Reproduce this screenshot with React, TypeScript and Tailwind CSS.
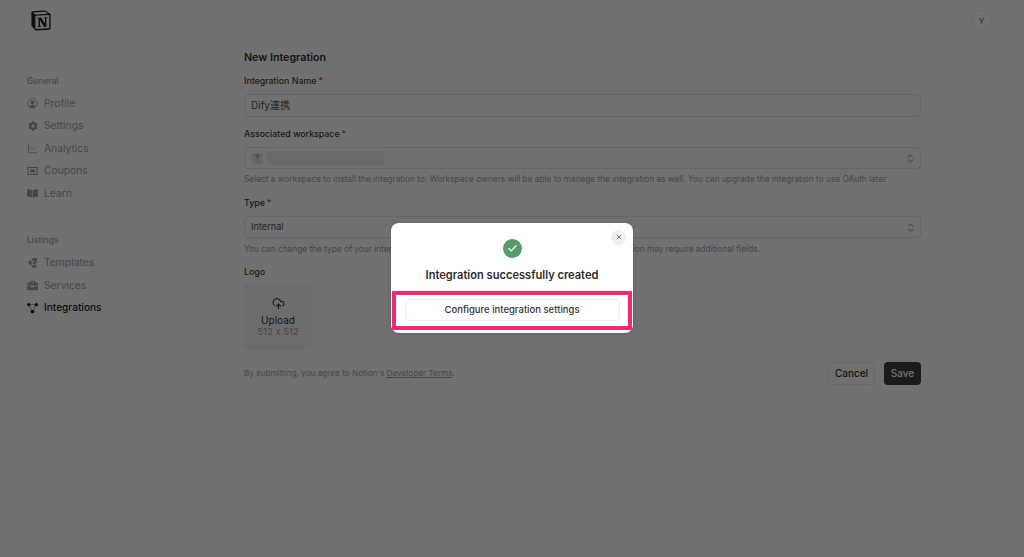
import { useState } from "react";
import { ChevronsUpDown, ChartLine, CloudUpload, Check, X } from "lucide-react";
import { FaBookOpen, FaBriefcase, FaCog } from "react-icons/fa";
import { SiNotion } from "react-icons/si";

const font = "font-['Inter','Noto_Sans_CJK_JP',sans-serif]";

const ProfileIcon = () => (
  <svg viewBox="0 0 12 12" className="w-[11px] h-[11px]" fill="currentColor">
    <circle cx="6" cy="6" r="5.2" fill="none" stroke="currentColor" strokeWidth="1" />
    <circle cx="6" cy="4.7" r="2" />
    <path d="M2.8 9.4 C3.4 7.8 4.6 7.3 6 7.3 C7.4 7.3 8.6 7.8 9.2 9.4 C7.6 10.9 4.4 10.9 2.8 9.4 Z" />
  </svg>
);

const CouponIcon = () => (
  <svg viewBox="0 0 12 12" className="w-[12px] h-[12px]" fill="none" stroke="currentColor" strokeWidth="1.2">
    <path d="M0.8 2.2 H11.2 V4.4 C10.4 4.6 10.4 7.4 11.2 7.6 V9.8 H0.8 V7.6 C1.6 7.4 1.6 4.6 0.8 4.4 Z" />
    <rect x="3.4" y="4.4" width="5.2" height="3.2" fill="currentColor" stroke="none" />
  </svg>
);

const TemplatesIcon = () => (
  <svg viewBox="0 0 12 12" className="w-[11px] h-[11px]" fill="currentColor">
    <path d="M5 1.5 L10.5 0.8 L11 6 L9 6.3 L8.6 4 L6 4.3 Z" />
    <path d="M0.8 6 L4.2 3.4 L5.2 5 L5.2 8.5 L3.8 9 Z" />
    <circle cx="7.8" cy="6.6" r="1.7" />
    <path d="M5 11.4 C5 9.4 6.2 8.8 7.8 8.8 C9.4 8.8 10.8 9.4 10.8 11.4 Z" />
  </svg>
);

const IntegrationsIcon = () => (
  <svg viewBox="0 0 12 12" className="w-[12px] h-[12px]" fill="currentColor" stroke="currentColor">
    <path d="M1.8 2.4 L6 9.8 M10.2 2.4 L6 9.8 M1.8 2.4 H10.2" strokeWidth="0.5" fill="none" />
    <circle cx="1.8" cy="2.4" r="1.8" stroke="none" />
    <circle cx="10.2" cy="2.4" r="1.8" stroke="none" />
    <circle cx="6" cy="9.8" r="2" stroke="none" />
  </svg>
);

const general = [
  { label: "Profile", icon: <ProfileIcon /> },
  { label: "Settings", icon: <FaCog className="w-[10px] h-[10px]" /> },
  { label: "Analytics", icon: <ChartLine className="w-[11px] h-[11px]" strokeWidth={1.8} /> },
  { label: "Coupons", icon: <CouponIcon /> },
  { label: "Learn", icon: <FaBookOpen className="w-[11px] h-[11px]" /> },
];

const listings = [
  { label: "Templates", icon: <TemplatesIcon /> },
  { label: "Services", icon: <FaBriefcase className="w-[11px] h-[11px]" /> },
  { label: "Integrations", icon: <IntegrationsIcon />, active: true },
];

type NavItem = { label: string; icon: React.ReactNode; active?: boolean };

const NavGroup = ({ title, items }: { title: string; items: NavItem[] }) => (
  <div className="flex flex-col">
    <div className="text-[8.5px] leading-[12px] font-medium text-[#a8a8a8] mb-[5px]">{title}</div>
    {items.map((item) => (
      <div
        key={item.label}
        className={`h-[22.6px] flex items-center gap-[6px] ${
          item.active ? "text-[10.1px] text-[#222] font-medium" : "text-[10.3px] text-[#a3a3a3]"
        }`}
      >
        <span className="w-[11px] flex justify-center">{item.icon}</span>
        {item.label}
      </div>
    ))}
  </div>
);

const Label = ({ text, required }: { text: string; required?: boolean }) => (
  <div className="text-[8.8px] leading-[14px] font-medium text-[#403e39]">
    {text}
    {required && <span className="text-[#d9453f] ml-[2px]">*</span>}
  </div>
);

const Help = ({ text }: { text: string }) => (
  <div className="text-[8.3px] leading-[12px] text-[#a3a3a3] mt-[4px]">{text}</div>
);

const App = () => {
  const [name] = useState("Dify連携");

  return (
    <div className={`relative w-screen h-screen overflow-hidden bg-white ${font}`}>
      <div className="h-[41px] flex items-center justify-between pl-[31px] pr-[32px] text-[#222]">
        <SiNotion className="w-[20px] h-[21px]" />
        <div className="w-[21px] h-[21px] rounded-full border border-[#efefef] flex items-center justify-center text-[8px] text-[#555]">
          Y
        </div>
      </div>

      <div className="flex">
        <aside className="w-[244px] pl-[27px] pt-[34px] flex flex-col gap-[29.5px]">
          <NavGroup title="General" items={general} />
          <NavGroup title="Listings" items={listings} />
        </aside>

        <main className="w-[677px] pt-[10px]">
          <h1 className="text-[10.7px] leading-[14px] font-semibold text-[#37352f] mb-[9px]">New Integration</h1>

          <Label text="Integration Name" required />
          <div className="h-[23px] mt-[6px] border border-[#e6e6e6] rounded-[4px] flex items-center px-[6px] text-[10px] text-[#55534e] mb-[10px]">
            {name}
          </div>

          <Label text="Associated workspace" required />
          <div className="h-[22px] mt-[6px] border border-[#e6e6e6] rounded-[4px] flex items-center justify-between pl-[7px] pr-[4px]">
            <div className="flex items-center gap-[4px]">
              <span className="w-[11px] h-[11px] rounded-[2px] bg-[#e8e8e8] flex items-center justify-center text-[6.5px] text-[#666]">
                Y
              </span>
              <span className="w-[117px] h-[14px] bg-[#f2f2f2]" />
            </div>
            <ChevronsUpDown className="w-[11px] h-[11px] text-[#777]" />
          </div>
          <Help text="Select a workspace to install the integration to. Workspace owners will be able to manage the integration as well. You can upgrade the integration to use OAuth later" />

          <div className="mt-[11px]">
            <Label text="Type" required />
          </div>
          <div className="h-[22px] mt-[6px] border border-[#e6e6e6] rounded-[4px] flex items-center justify-between pl-[6px] pr-[4px] text-[9.2px] text-[#55534e]">
            Internal
            <ChevronsUpDown className="w-[11px] h-[11px] text-[#777]" />
          </div>
          <div className="pt-[1px]">
            <Help text="You can change the type of your integration at any time later on, but switching it to a public integration may require additional fields." />
          </div>

          <div className="mt-[10px]">
            <Label text="Logo" />
          </div>
          <div className="w-[68px] h-[67px] mt-[4px] bg-[#f5f5f5] rounded-[4px] flex flex-col items-center justify-center pt-[2px] [font-feature-settings:'calt'_0]">
            <CloudUpload className="w-[13px] h-[13px] text-[#37352f] mb-[4px]" />
            <div className="text-[10px] leading-[12px] text-[#37352f]">Upload</div>
            <div className="text-[9.5px] leading-[12px] text-[#a3a3a3]">512 x 512</div>
          </div>

          <div className="flex items-center justify-between mt-[12px]">
            <div className="text-[8.2px] text-[#a3a3a3]">
              By submitting, you agree to Notion's <span className="underline">Developer Terms</span>.
            </div>
            <div className="flex gap-[9px]">
              <button className="w-[47px] h-[23px] rounded-[4px] border border-[#ececec] text-[10px] font-medium text-[#37352f]">
                Cancel
              </button>
              <button className="w-[37px] h-[23px] rounded-[4px] bg-[#3f3f3f] text-[10px] font-medium text-white">
                Save
              </button>
            </div>
          </div>
        </main>
      </div>

      {/* dimmed backdrop + dialog */}
      <div className="absolute inset-0 bg-black/[0.56] flex items-center justify-center pb-[2px]">
        <div className="relative w-[242px] h-[110px] bg-white rounded-[8px] flex flex-col items-center pt-[16px] shadow-sm">
          <button className="absolute top-[7px] right-[7px] w-[15px] h-[15px] rounded-full bg-[#f0f0f0] flex items-center justify-center text-[#666]">
            <X className="w-[8px] h-[8px]" strokeWidth={2.5} />
          </button>
          <div className="w-[19px] h-[19px] rounded-full bg-[#579b6f] flex items-center justify-center">
            <Check className="w-[11px] h-[11px] text-white" strokeWidth={2.5} />
          </div>
          <div className="mt-[9px] text-[11.1px] leading-[16px] font-semibold text-[#2b2b2b]">
            Integration successfully created
          </div>
          <div className="mt-[8px] w-[240px] h-[39px] border-[4px] border-[#f5296d] flex items-center justify-center">
            <button className="w-[215px] h-[22px] rounded-[4px] border border-[#ececec] text-[9.5px] font-medium text-[#37352f]">
              Configure integration settings
            </button>
          </div>
        </div>
      </div>
    </div>
  );
};

export default App;
